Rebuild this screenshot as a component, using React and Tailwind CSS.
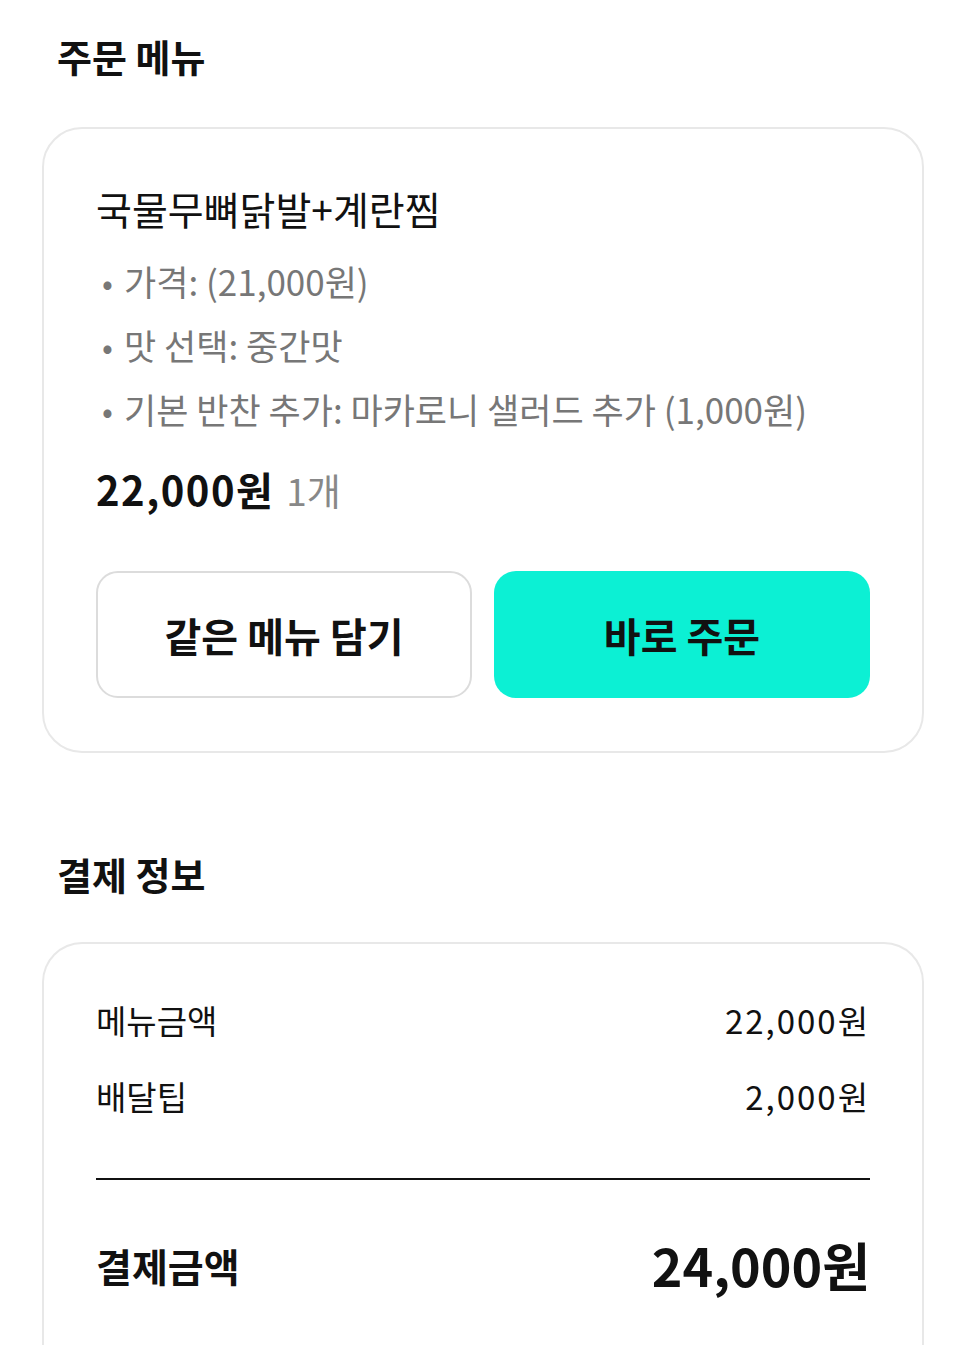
const font = { fontFamily: '"Noto Sans CJK KR", "Noto Sans", sans-serif' };

const options = [
  "가격: (21,000원)",
  "맛 선택: 중간맛",
  "기본 반찬 추가: 마카로니 샐러드 추가 (1,000원)",
];

const Row = ({ label, value }) => (
  <div className="flex items-center justify-between h-[40px] text-[33px] text-[#111]">
    <span>{label}</span>
    <span className="tracking-[2px]">{value}</span>
  </div>
);

export default function App() {
  return (
    <div className="bg-white min-h-screen px-[42px] pt-[30px] pb-10" style={font}>
      <h2 className="pl-[15px] text-[38px] font-bold leading-[52px] text-[#111]">주문 메뉴</h2>

      <div className="mt-[45px] rounded-[40px] border-2 border-[#e8e8e8] px-[52px] pt-[54px] pb-[53px]">
        <div className="text-[39px] leading-[50px] text-[#111]">국물무뼈닭발+계란찜</div>
        <ul className="mt-[16px] text-[35px] leading-[64px] text-[#777]">
          {options.map((o) => (
            <li key={o} className="flex items-center">
              <span className="w-[28px] pl-[6px] text-[32px] leading-[64px]">•</span>
              <span>{o}</span>
            </li>
          ))}
        </ul>
        <div className="mt-[20px] flex items-baseline gap-[12px] leading-[56px]">
          <span className="text-[40px] font-bold tracking-[1.5px] text-[#111]">22,000원</span>
          <span className="text-[37px] text-[#888]">1개</span>
        </div>
        <div className="mt-[53px] grid grid-cols-2 gap-[22px]">
          <button className="h-[127px] rounded-[22px] border-2 border-[#dcdcdc] bg-white text-[40px] font-bold text-[#111]">
            같은 메뉴 담기
          </button>
          <button className="h-[127px] rounded-[22px] bg-[#0cf0d4] text-[40px] font-bold text-[#111]">
            바로 주문
          </button>
        </div>
      </div>

      <h2 className="mt-[95px] pl-[15px] text-[38px] font-bold leading-[52px] text-[#111]">결제 정보</h2>

      <div className="mt-[42px] rounded-t-[40px] border-2 border-b-0 border-[#e8e8e8] px-[52px] pt-[57px] pb-[60px]">
        <div className="flex flex-col gap-[36px]">
          <Row label="메뉴금액" value="22,000원" />
          <Row label="배달팁" value="2,000원" />
        </div>
        <div className="mt-[61px] h-[2px] bg-[#111]" />
        <div className="mt-[55px] flex items-center justify-between h-[60px] text-[#111]">
          <span className="text-[39px] font-bold">결제금액</span>
          <span className="text-[52px] font-bold">24,000원</span>
        </div>
      </div>
    </div>
  );
}
